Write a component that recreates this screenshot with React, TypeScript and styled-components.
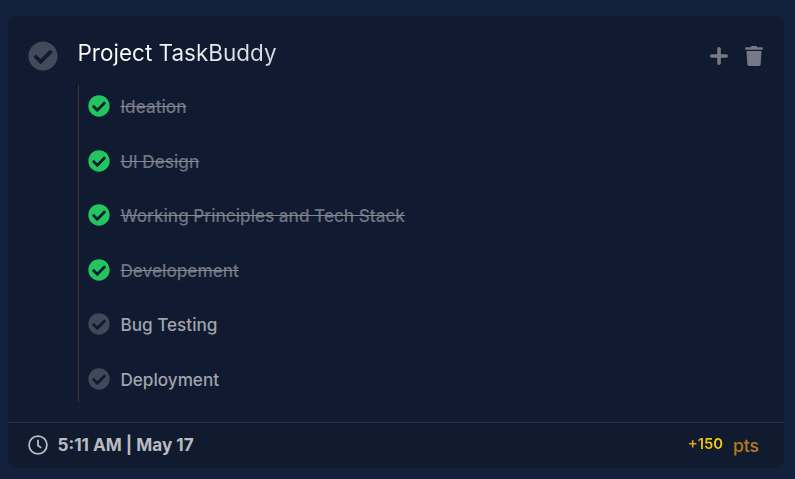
import React from "react";
import styled, { createGlobalStyle } from "styled-components";
import { FaCheckCircle, FaTrash } from "react-icons/fa";

const GlobalStyle = createGlobalStyle`
  * { box-sizing: border-box; }
  body {
    margin: 0;
    background: #14213d;
    font-family: Inter, sans-serif;
  }
`;

const Page = styled.main`
  height: 479px;
  padding: 16px 11px 11px 8px;
  background: #14213d;
`;

const Card = styled.article`
  height: 452px;
  display: flex;
  flex-direction: column;
  overflow: hidden;
  border-radius: 10px;
  background: #101a30;
`;

const Body = styled.div`
  flex: 1;
  display: flex;
  align-items: flex-start;
  padding: 25px 20px 0;
`;

const ProjectCheck = styled(FaCheckCircle)`
  width: 30px;
  height: 30px;
  flex: none;
  color: #42495b;
`;

const Content = styled.div`
  flex: 1;
  margin-left: 20px;
`;

const Title = styled.h1`
  width: max-content;
  height: 28px;
  margin: -2px 0 18px -0.5px;
  font-size: 22.5px;
  font-weight: 430;
  line-height: 28px;
  color: transparent;
  background: linear-gradient(90deg, #ffffff 25%, #d6d8dc 100%);
  background-clip: text;
  -webkit-background-clip: text;
`;

const TaskList = styled.ul`
  height: 317px;
  margin: 0;
  padding: 10px 0 0 9px;
  list-style: none;
  border-left: 1px solid #40362e;
`;

const Task = styled.li`
  height: 54.6px;
  display: flex;
  align-items: flex-start;
  gap: 10.4px;
`;

const TaskCheck = styled(FaCheckCircle)<{ $done: boolean }>`
  width: 22px;
  height: 22px;
  flex: none;
  color: ${({ $done }) => ($done ? "#22c55e" : "#414859")};
`;

const TaskName = styled.span<{ $done: boolean }>`
  margin-top: 1px;
  font-size: 17.15px;
  font-weight: 500;
  line-height: 22px;
  color: ${({ $done }) => ($done ? "#6f7481" : "#a0a3ab")};
  text-decoration: ${({ $done }) => ($done ? "line-through #858995" : "none")};
`;

const Actions = styled.div`
  display: flex;
  align-items: center;
  gap: 15px;
  margin-top: 5px;
  color: #757a86;
`;

const PlusIcon = styled.svg`
  width: 20px;
  height: 20px;
  fill: none;
  stroke: currentColor;
  stroke-width: 3.6;
  stroke-linecap: round;
`;

const Footer = styled.footer`
  height: 46px;
  display: flex;
  align-items: center;
  justify-content: space-between;
  padding: 0 25px 1px 20px;
  border-top: 1px solid #2c3544;
  background: #111b2f;
`;

const Due = styled.div`
  display: flex;
  align-items: center;
  gap: 9.5px;
  font-size: 17.15px;
  font-weight: 700;
  color: #b8bbc1;
`;

const DueText = styled.span`
  margin-top: -2px;
`;

const ClockIcon = styled.svg`
  width: 20px;
  height: 20px;
  fill: none;
  stroke: currentColor;
  stroke-width: 1.8;
`;

const Reward = styled.div`
  display: flex;
  align-items: center;
  gap: 10px;
`;

const Points = styled.span`
  margin-top: -3px;
  font-size: 14.8px;
  font-weight: 600;
  color: transparent;
  background: linear-gradient(90deg, #dda01c, #f9d006 75%);
  background-clip: text;
  -webkit-background-clip: text;
`;

const Unit = styled.span`
  font-size: 17.5px;
  font-weight: 500;
  color: #b57a1b;
`;

const tasks = [
  { name: "Ideation", done: true },
  { name: "UI Design", done: true },
  { name: "Working Principles and Tech Stack", done: true },
  { name: "Developement", done: true },
  { name: "Bug Testing", done: false },
  { name: "Deployment", done: false },
];

export default function App() {
  return (
    <Page>
      <GlobalStyle />
      <Card>
        <Body>
          <ProjectCheck />
          <Content>
            <Title>Project TaskBuddy</Title>
            <TaskList>
              {tasks.map(({ name, done }) => (
                <Task key={name}>
                  <TaskCheck $done={done} />
                  <TaskName $done={done}>{name}</TaskName>
                </Task>
              ))}
            </TaskList>
          </Content>
          <Actions>
            <PlusIcon viewBox="0 0 20 20">
              <path d="M10 2.8v14.4M2.8 10h14.4" />
            </PlusIcon>
            <FaTrash size={20} />
          </Actions>
        </Body>
        <Footer>
          <Due>
            <ClockIcon viewBox="0 0 20 20">
              <circle cx="10" cy="10" r="8.9" />
              <path d="M10 4.8v5.7l3.2 2.4" strokeLinejoin="round" />
            </ClockIcon>
            <DueText>5:11 AM | May 17</DueText>
          </Due>
          <Reward>
            <Points>+150</Points>
            <Unit>pts</Unit>
          </Reward>
        </Footer>
      </Card>
    </Page>
  );
}
